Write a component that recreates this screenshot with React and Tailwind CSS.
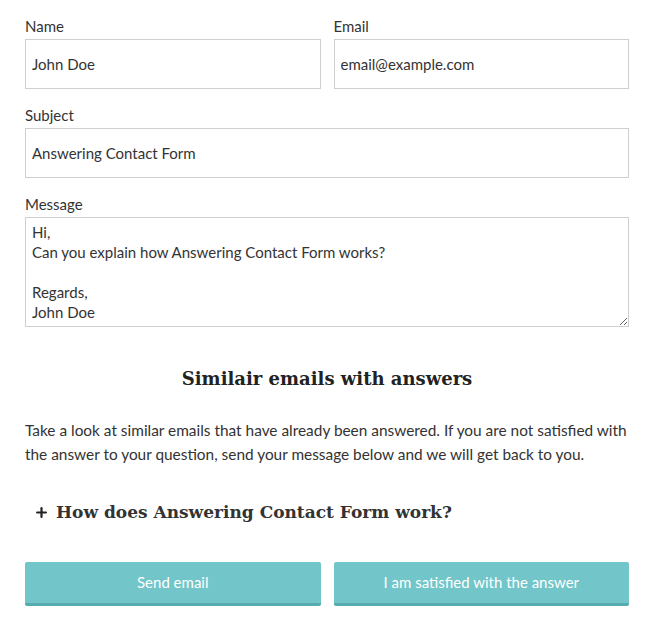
import { Plus } from "lucide-react";

const sans = "font-['Lato','Open_Sans',sans-serif]";
const slab = "font-['DejaVu_Serif','Liberation_Serif',serif]";

const Field = ({ label, value, className = "" }) => (
  <div className={className}>
    <label className="block text-[15px] leading-[20px] text-[#333] mb-[3px]">{label}</label>
    <input
      type="text"
      defaultValue={value}
      className="w-full h-[50px] border border-[#cfcfcf] px-[6px] text-[15px] text-[#333] outline-none"
    />
  </div>
);

export default function App() {
  return (
    <div className={`${sans} bg-white w-[660px] min-h-[628px] pl-[25px] pr-[31px] pt-[16px] text-[#333]`}>
      {/* top row */}
      <div className="grid grid-cols-2 gap-[13px]">
        <Field label="Name" value="John Doe" />
        <Field label="Email" value="email@example.com" />
      </div>

      <Field label="Subject" value="Answering Contact Form" className="mt-[16px]" />

      <div className="mt-[16px]">
        <label className="block text-[15px] leading-[20px] mb-[3px]">Message</label>
        <textarea
          className="block w-full h-[110px] border border-[#cfcfcf] px-[6px] pt-[4px] text-[15px] leading-[20px] text-[#333] outline-none"
          defaultValue={"Hi,\nCan you explain how Answering Contact Form works?\n\nRegards,\nJohn Doe"}
        />
      </div>

      <h2 className={`${slab} mt-[39px] text-center text-[18px] font-bold leading-[26px] text-[#222]`}>
        Similair emails with answers
      </h2>

      <p className="mt-[26px] text-[15.4px] leading-[24px]">
        Take a look at similar emails that have already been answered. If you are not satisfied with
        the answer to your question, send your message below and we will get back to you.
      </p>

      <div className="mt-[33px] flex items-center gap-[7px] pl-[9px]">
        <Plus size={15} strokeWidth={3.5} className="text-[#222]" />
        <span className={`${slab} text-[17px] font-bold leading-[26px] text-[#333]`}>
          How does Answering Contact Form work?
        </span>
      </div>

      <div className="mt-[37px] grid grid-cols-2 gap-[13px]">
        <button className="h-[44px] rounded-[2px] bg-[#72c5c8] border-b-[3px] border-[#56abae] text-white text-[15px]">
          Send email
        </button>
        <button className="h-[44px] rounded-[2px] bg-[#72c5c8] border-b-[3px] border-[#56abae] text-white text-[15px]">
          I am satisfied with the answer
        </button>
      </div>
    </div>
  );
}
